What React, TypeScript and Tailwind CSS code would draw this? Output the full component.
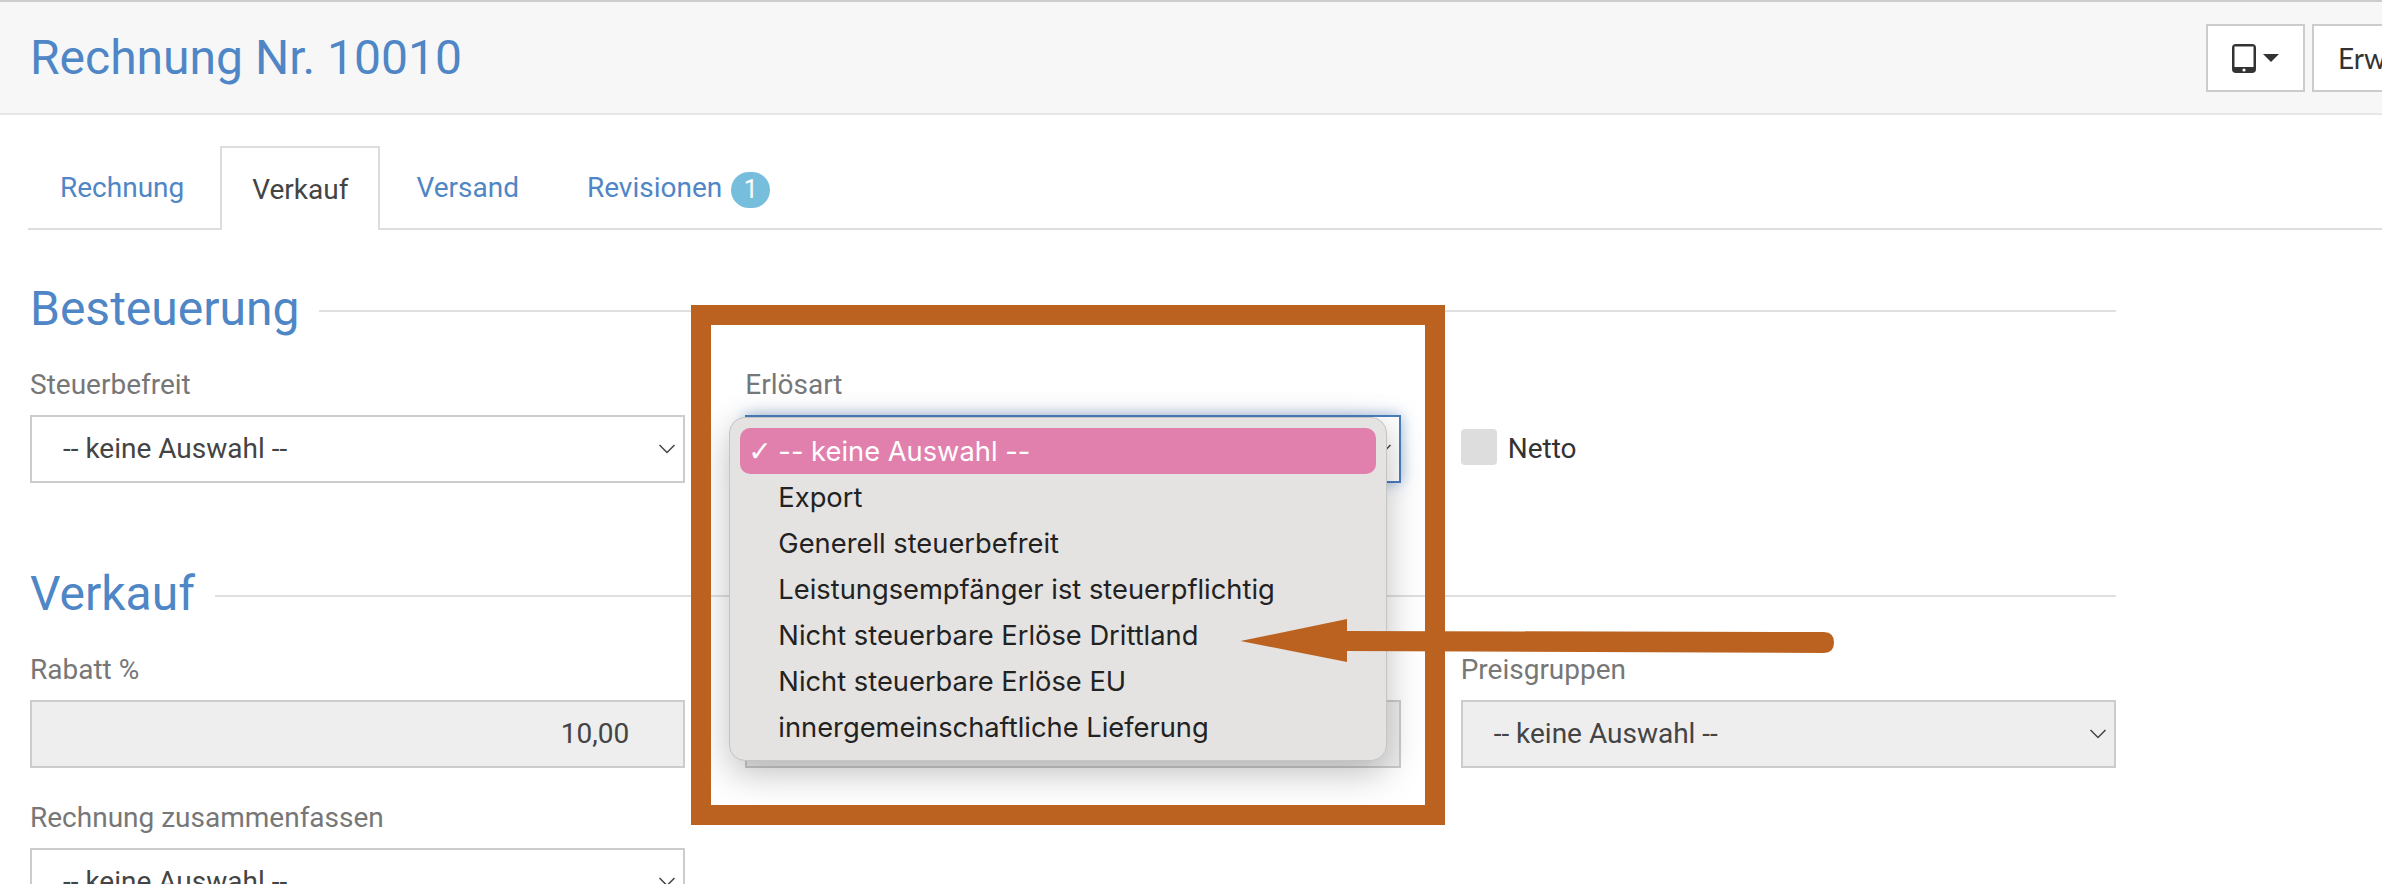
const selectOptions = [
  "Export",
  "Generell steuerbefreit",
  "Leistungsempfänger ist steuerpflichtig",
  "Nicht steuerbare Erlöse Drittland",
  "Nicht steuerbare Erlöse EU",
  "innergemeinschaftliche Lieferung",
];

const Chevron = () => (
  <svg width="18" height="10" viewBox="0 0 18 10" fill="none" className="shrink-0">
    <path d="M1.5 1 L9 8.5 L16.5 1" stroke="#444" strokeWidth="1.5" />
  </svg>
);

const Heading = ({ title, top }: { title: string; top: string }) => (
  <div className={`flex h-[60px] items-center ${top}`}>
    <h2 className="pt-[2px] text-[48px] font-normal leading-[60px] text-[#4f86c6]">{title}</h2>
    <div className="ml-[20px] mt-[6px] h-[2px] flex-1 bg-[#e0e0e0]" />
  </div>
);

const Label = ({ children }: { children?: React.ReactNode }) => (
  <label className="mb-[15px] block h-[32px] text-[28px] leading-[34px] text-[#777]">{children}</label>
);

const SelectBox = ({ disabled }: { disabled?: boolean }) => (
  <div
    className={`flex h-[68px] items-center justify-between border-2 border-[#ccc] pl-[31px] pr-[7px] text-[28px] text-[#444] ${
      disabled ? "bg-[#eee]" : "bg-white"
    }`}
  >
    <span>-- keine Auswahl --</span>
    <Chevron />
  </div>
);

export default function App() {
  return (
    <div className="relative h-[884px] w-[2382px] overflow-hidden bg-white font-[Roboto,sans-serif]">
      {/* page header */}
      <header className="flex h-[115px] items-center justify-between border-t-2 border-b-2 border-t-[#ccc] border-b-[#e7e7e7] bg-[#f7f7f7] pl-[30px]">
        <h1 className="text-[48px] font-normal text-[#4f86c6]">Rechnung Nr. 10010</h1>
        <div className="flex w-[176px] shrink-0 gap-[7px] self-start pt-[22px]">
          <button className="flex h-[68px] w-[99px] shrink-0 items-center justify-center gap-[7px] border-2 border-[#ccc] bg-white">
            <svg width="24" height="29" viewBox="0 0 24 29">
              <rect width="24" height="29" rx="4" fill="#333" />
              <rect x="2.5" y="2.5" width="19" height="20.5" fill="#fff" />
              <circle cx="12" cy="26" r="1.6" fill="#fff" />
            </svg>
            <span className="h-0 w-0 border-x-[8px] border-t-[8px] border-x-transparent border-t-[#333]" />
          </button>
          <button className="h-[68px] w-[200px] shrink-0 border-2 border-[#ccc] bg-white pl-[24px] text-left font-[Lato,sans-serif] text-[28px] text-[#333]">
            Erweitert
          </button>
        </div>
      </header>

      {/* tabs */}
      <nav className="ml-[28px] mt-[31px] flex h-[84px] items-stretch border-b-2 border-[#ddd] text-[28px]">
        <a className="flex items-center pl-[32px] pr-[36px] pt-[2px] text-[#4f86c6]">Rechnung</a>
        <a className="mb-[-2px] flex h-[84px] items-center border-2 border-b-0 border-[#ddd] bg-white px-[30px] pt-[2px] text-[#444]">
          Verkauf
        </a>
        <a className="flex items-center pl-[36px] pr-[34px] pt-[2px] text-[#4f86c6]">Versand</a>
        <a className="flex items-center pl-[34px] pt-[2px] text-[#4f86c6]">
          Revisionen
          <span className="ml-[9px] mt-[4px] flex h-[36px] w-[39px] items-center justify-center rounded-full bg-[#77bedd] text-[25px] text-white">
            1
          </span>
        </a>
      </nav>

      <main className="w-[2116px] pl-[30px]">
        <Heading title="Besteuerung" top="mt-[48px]" />
        <div className="mt-[30px] grid grid-cols-3 gap-x-[60px]">
          <div>
            <Label>Steuerbefreit</Label>
            <SelectBox />
          </div>
          <div>
            <Label>Erlösart</Label>
            <div className="relative">
              <div className="flex h-[68px] items-center justify-end border-2 border-[#4a7ebb] bg-white pr-[7px] shadow-[0_0_14px_rgba(74,126,187,0.55)]">
                <Chevron />
              </div>
              {/* open native dropdown */}
              <div className="absolute left-[-16px] top-[2px] z-10 h-[344px] w-[658px] rounded-[16px] border border-[#c4c4c4] bg-[#e4e3e1] px-[10px] pt-[10px] font-[Inter,sans-serif] text-[27.3px] text-[#222] shadow-[0_12px_36px_rgba(0,0,0,0.25)]">
                <div className="flex h-[46px] items-center rounded-[10px] bg-[#e280ad] pt-[2px] text-white">
                  <span className="w-[38px] pl-[8px] font-['DejaVu_Sans',sans-serif] text-[28px] font-bold">✓</span>
                  <span>-- keine Auswahl --</span>
                </div>
                {selectOptions.map((option) => (
                  <div key={option} className="flex h-[46px] items-center pl-[38px] pt-[2px]">
                    {option}
                  </div>
                ))}
              </div>
            </div>
          </div>
          <div className="flex items-start pt-[61px]">
            <span className="h-[36px] w-[36px] rounded-[4px] bg-[#ddd]" />
            <span className="ml-[11px] text-[28px] leading-[40px] text-[#333]">Netto</span>
          </div>
        </div>

        <Heading title="Verkauf" top="mt-[80px]" />
        <div className="mt-[30px] grid grid-cols-3 gap-x-[60px] gap-y-[33px]">
          <div>
            <Label>Rabatt %</Label>
            <div className="flex h-[68px] items-center justify-end border-2 border-[#ccc] bg-[#eee] pr-[54px] text-[28px] text-[#444]">
              10,00
            </div>
          </div>
          <div>
            <Label />
            <div className="h-[68px] border-2 border-[#ccc] bg-[#eee]" />
          </div>
          <div>
            <Label>Preisgruppen</Label>
            <SelectBox disabled />
          </div>
          <div>
            <Label>Rechnung zusammenfassen</Label>
            <SelectBox />
          </div>
        </div>
      </main>

      {/* annotation: box and arrow */}
      <div className="absolute left-[691px] top-[305px] z-20 h-[520px] w-[754px] border-[20px] border-[#bb6220]" />
      <svg className="absolute left-[1230px] top-[610px] z-20" width="620" height="60" viewBox="0 0 620 60">
        <path
          d="M10.5 31 L117 9 L117 21 L594 22 Q604 22 604 32.5 Q604 43 594 43 L117 41 L117 52 Z"
          fill="#bb6220"
        />
      </svg>
    </div>
  );
}
